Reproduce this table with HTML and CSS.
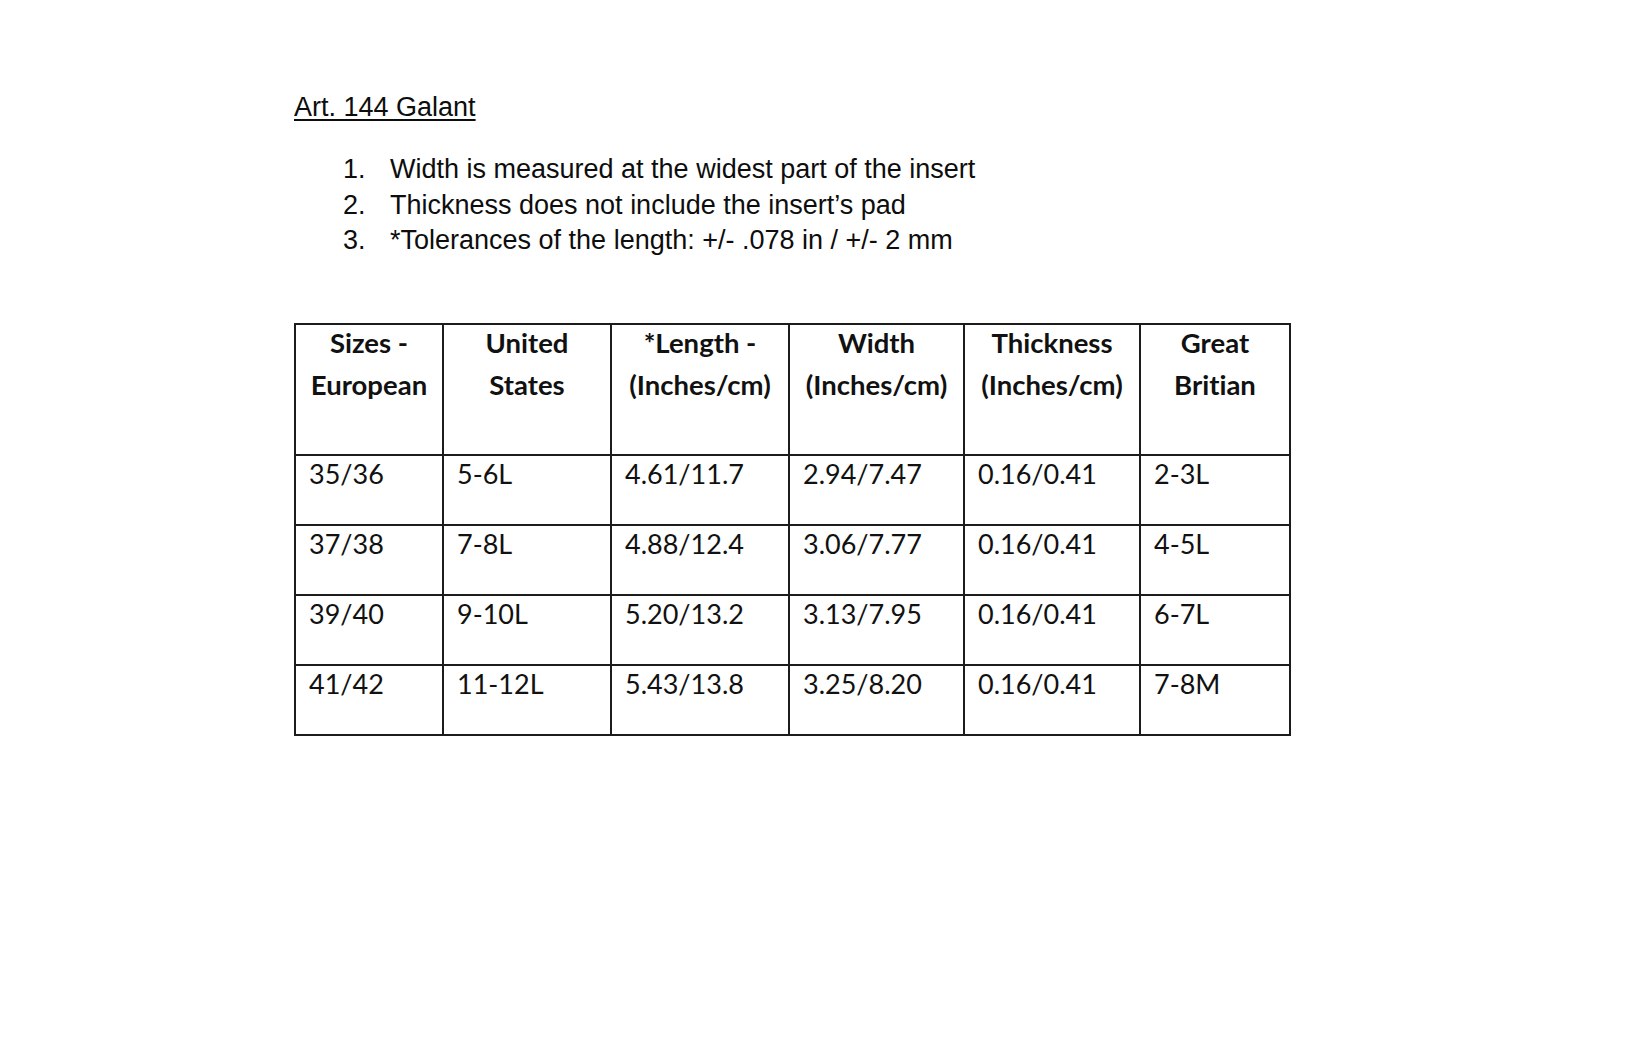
FILE: index.html
```html
<!DOCTYPE html>
<html lang="en">
<head>
<meta charset="utf-8">
<title>Art. 144 Galant</title>
<link rel="stylesheet" href="styles.css">
</head>
<body>
<main class="page">
  <h1 class="title">Art. 144 Galant</h1>
  <ol class="notes">
    <li><span class="num">1.</span><span>Width is measured at the widest part of the insert</span></li>
    <li><span class="num">2.</span><span>Thickness does not include the insert’s pad</span></li>
    <li><span class="num">3.</span><span>*Tolerances of the length: +/- .078 in / +/- 2 mm</span></li>
  </ol>
  <table class="sizes">
    <colgroup>
      <col class="c1"><col class="c2"><col class="c3"><col class="c4"><col class="c5"><col class="c6">
    </colgroup>
    <thead>
      <tr>
        <th><div class="hd">Sizes -<br>European</div></th>
        <th><div class="hd">United<br>States</div></th>
        <th><div class="hd">*Length -<br>(Inches/cm)</div></th>
        <th><div class="hd">Width<br>(Inches/cm)</div></th>
        <th><div class="hd">Thickness<br>(Inches/cm)</div></th>
        <th><div class="hd">Great<br>Britian</div></th>
      </tr>
    </thead>
    <tbody>
      <tr><td>35/36</td><td>5-6L</td><td>4.61/11.7</td><td>2.94/7.47</td><td>0.16/0.41</td><td>2-3L</td></tr>
      <tr><td>37/38</td><td>7-8L</td><td>4.88/12.4</td><td>3.06/7.77</td><td>0.16/0.41</td><td>4-5L</td></tr>
      <tr><td>39/40</td><td>9-10L</td><td>5.20/13.2</td><td>3.13/7.95</td><td>0.16/0.41</td><td>6-7L</td></tr>
      <tr><td>41/42</td><td>11-12L</td><td>5.43/13.8</td><td>3.25/8.20</td><td>0.16/0.41</td><td>7-8M</td></tr>
    </tbody>
  </table>
</main>
</body>
</html>
```

FILE: styles.css
```css
html, body {
  margin: 0;
  padding: 0;
  background: #ffffff;
  color: #0d0d0d;
}

.page {
  padding: 92px 0 0 294px;
  font-family: "Liberation Sans", Arial, sans-serif;
}

.title {
  margin: 0;
  font-size: 27px;
  font-weight: normal;
  line-height: 31px;
  text-decoration: underline;
  text-decoration-thickness: 2px;
  text-underline-offset: 3px;
  display: inline-block;
}

.notes {
  list-style: none;
  margin: 29px 0 0 49px;
  padding: 0;
  font-size: 27px;
  line-height: 35.6px;
}

.notes li {
  display: grid;
  grid-template-columns: 47px auto;
}

.sizes {
  margin-top: 64px;
  border-collapse: collapse;
  table-layout: fixed;
  width: 995px;
  font-family: Lato, "Open Sans", sans-serif;
  font-variant-ligatures: none;
  color: #111;
}

.c1 { width: 148px; }
.c2 { width: 168px; }
.c3 { width: 178px; }
.c4 { width: 175px; }
.c5 { width: 176px; }
.c6 { width: 150px; }

.sizes th,
.sizes td {
  border: 2px solid #1c1c1c;
  vertical-align: top;
  padding: 0;
}

.sizes th {
  height: 129px;
  font-size: 27.5px;
  font-weight: bold;
  line-height: 42px;
  text-align: center;
  white-space: nowrap;
}

.hd {
  margin-top: -3px;
}

.sizes td {
  height: 68px;
  font-size: 27px;
  line-height: 36px;
  padding-left: 13px;
  text-align: left;
  white-space: nowrap;
}
```
